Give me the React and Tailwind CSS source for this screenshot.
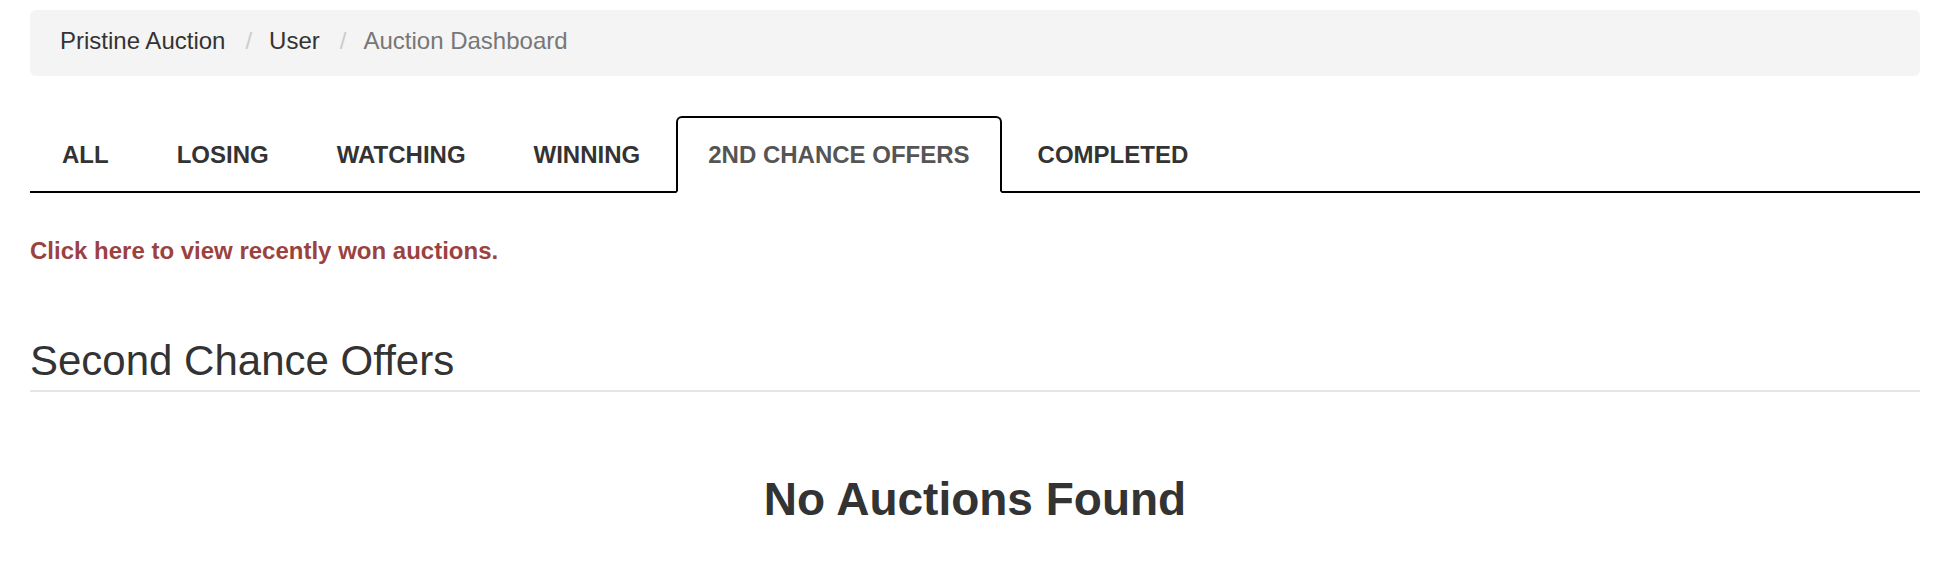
const tabs = ["All", "Losing", "Watching", "Winning", "2nd Chance Offers", "Completed"];
const activeTab = "2nd Chance Offers";

export default function App() {
  return (
    <div
      className="min-h-[576px] bg-white pl-[30px] pr-[38px] pt-[10px] text-[#333]"
      style={{ fontFamily: '"Liberation Sans", Arial, sans-serif' }}
    >
      <nav className="h-[66px] rounded-[6px] bg-[#f4f4f4] px-[30px] pb-[5px] flex items-center text-[24px] leading-[27px]">
        <span>Pristine Auction</span>
        <span className="ml-[20px] mr-[17px] text-[#ccc]">/</span>
        <span>User</span>
        <span className="ml-[20px] mr-[17px] text-[#ccc]">/</span>
        <span className="text-[#777]">Auction Dashboard</span>
      </nav>

      <ul className="mt-[40px] flex border-b-2 border-black">
        {tabs.map((t) => {
          const active = t === activeTab;
          return (
            <li key={t} className="mr-[4px] -mb-[2px]">
              <a
                href="#"
                className={
                  "block border-2 px-[30px] py-[23px] text-[24px] leading-[27px] font-bold uppercase rounded-t-[6px] " +
                  (active
                    ? "border-black border-b-white bg-white text-[#555]"
                    : "border-transparent text-[#333]")
                }
              >
                {t}
              </a>
            </li>
          );
        })}
      </ul>

      <a href="#" className="block mt-[44px] text-[24px] leading-[27px] font-bold text-[#9b4240]">
        Click here to view recently won auctions.
      </a>

      <h2 className="mt-[74px] text-[42px] leading-[46px] pb-[6px] border-b-2 border-[#e6e6e6]">
        Second Chance Offers
      </h2>

      <h2 className="mt-[82px] text-center text-[46px] leading-[51px] font-bold">No Auctions Found</h2>
    </div>
  );
}
